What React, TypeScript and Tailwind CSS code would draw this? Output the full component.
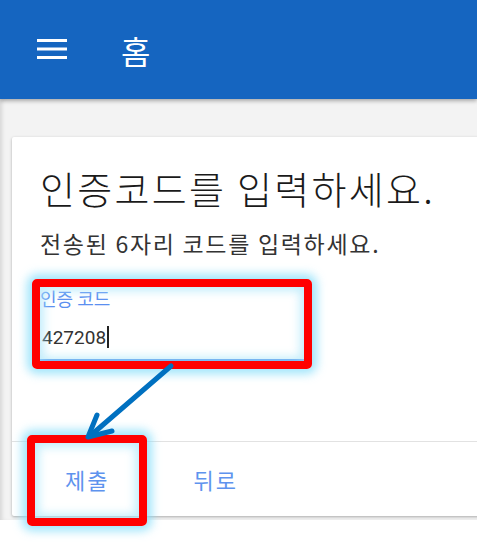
const kr = { fontFamily: '"Noto Sans CJK KR", "Noto Sans", sans-serif' };

// Hamburger drawn to match the thick Material lines
function MenuIcon() {
    return (
        <svg width="30" height="21" viewBox="0 0 30 21" fill="#ffffff">
            <rect x="0" y="0" width="30" height="3" />
            <rect x="0" y="8.5" width="30" height="3" />
            <rect x="0" y="17" width="30" height="3" />
        </svg>
    );
}

export default function App() {
    return (
        <div className="relative w-[477px] h-[543px] overflow-hidden bg-white" style={kr}>
            {/* App bar */}
            <header className="relative z-10 h-[99px] bg-[#1565c0] flex items-center shadow-[0_2px_4px_rgba(0,0,0,0.3)]">
                <div className="ml-[37px] flex items-center">
                    <MenuIcon />
                </div>
                <h1 className="ml-[54px] text-[32px] leading-none text-white font-normal">홈</h1>
            </header>

            {/* Page */}
            <main className="relative h-[421px] bg-[#f3f3f3] pl-[12px] pt-[38px] shadow-[inset_4px_0_4px_-2px_rgba(0,0,0,0.12)]">
                <section className="w-[480px] h-[379px] bg-white rounded-[2px] shadow-[0_1px_3px_rgba(0,0,0,0.3)] flex flex-col">
                    <div className="h-[304px] pl-[28px] pt-[28px]">
                        <h2 className="text-[38px] leading-[1.2] text-[#1a1a1a] font-light tracking-[2.3px] whitespace-nowrap">
                            인증코드를 입력하세요.
                        </h2>
                        <p className="mt-[18px] text-[23px] leading-[1.3] text-[#333] tracking-[1.7px] whitespace-nowrap">
                            전송된 6자리 코드를 입력하세요.
                        </p>

                        {/* Text field */}
                        <div className="mt-[30px] w-[272px]">
                            <label className="block text-[18px] leading-[1.2] text-[#5b8ff0]">인증 코드</label>
                            <div className="mt-[14px] flex items-center h-[26px] border-b-2 border-[#4a86e8] pb-[9px] box-content">
                                <span className="text-[19px] text-[#333] font-['Roboto'] leading-none ml-[2px]">427208</span>
                                <span className="ml-[1px] w-[2px] h-[22px] bg-[#222]" />
                            </div>
                        </div>
                    </div>

                    {/* Actions */}
                    <div className="flex-1 border-t border-[#e2e2e2] flex items-center pl-[53px] gap-[84px]">
                        <button className="text-[22px] text-[#5e93ee] leading-none tracking-[2px]">제출</button>
                        <button className="text-[22px] text-[#5e93ee] leading-none tracking-[2px]">뒤로</button>
                    </div>
                </section>
            </main>

            {/* Annotation: red boxes with cyan glow */}
            <div className="absolute left-[32px] top-[279px] w-[280px] h-[90px] border-[8px] border-[#ff0000] rounded-[5px] shadow-[0_0_10px_5px_rgba(130,220,250,0.75),inset_0_0_10px_4px_rgba(170,230,250,0.7)] pointer-events-none" />
            <div className="absolute left-[27px] top-[435px] w-[120px] h-[91px] border-[8px] border-[#ff0000] rounded-[5px] shadow-[0_0_10px_5px_rgba(130,220,250,0.75),inset_0_0_10px_4px_rgba(170,230,250,0.7)] pointer-events-none" />

            {/* Annotation: arrow */}
            <svg className="absolute inset-0 pointer-events-none" width="477" height="543" viewBox="0 0 477 543">
                <g stroke="#0070c0" strokeWidth="5" strokeLinecap="round" strokeLinejoin="round" fill="none">
                    <line x1="171" y1="366" x2="90" y2="436" />
                    <polyline points="97,415 88,437 112,431" />
                </g>
            </svg>
        </div>
    );
}
